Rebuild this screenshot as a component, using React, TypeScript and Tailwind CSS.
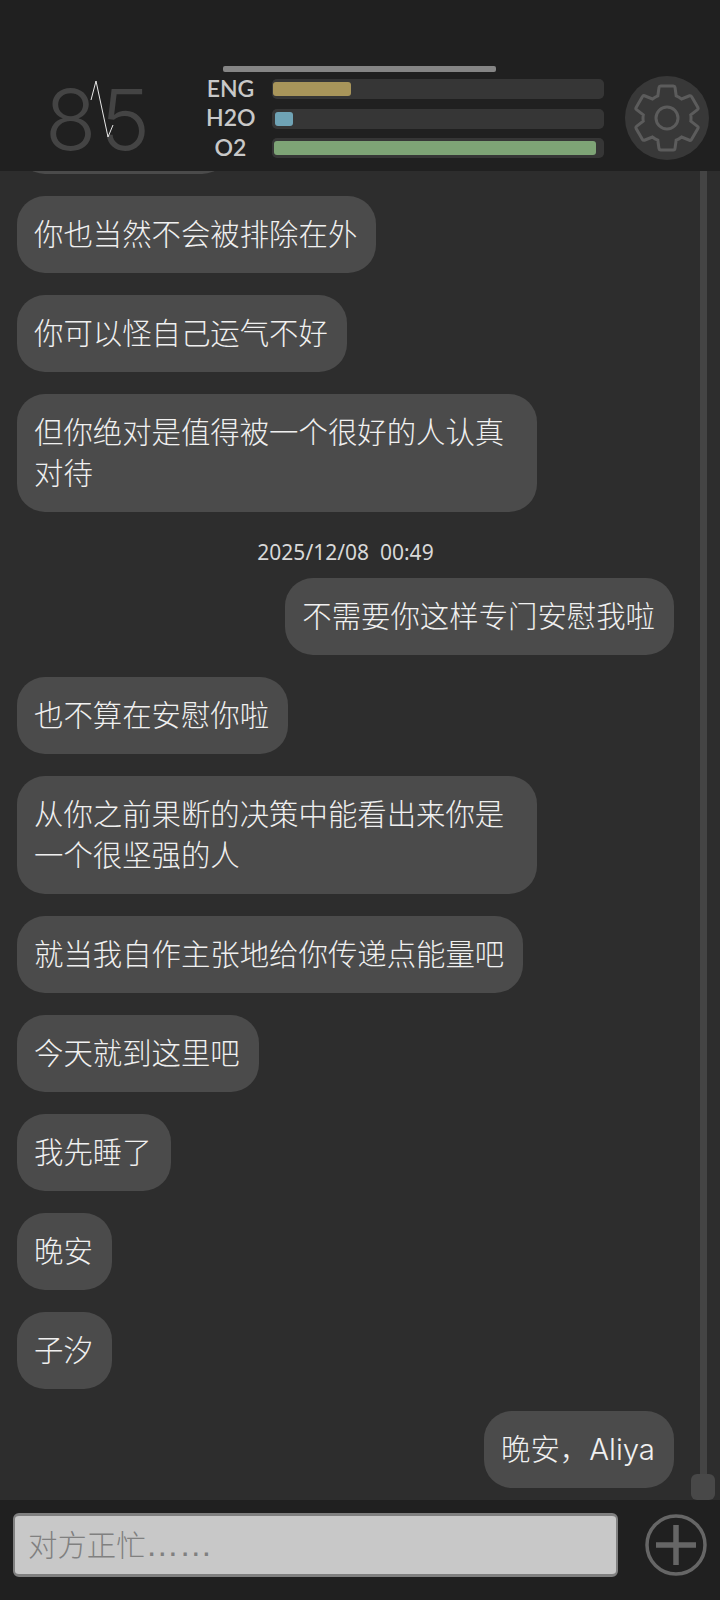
import { Fragment } from "react"

type Message = { id: number; text?: string; mine?: boolean; time?: string }

const messages: Message[] = [
  { id: 1, text: "你也当然不会被排除在外" },
  { id: 2, text: "你可以怪自己运气不好" },
  { id: 3, text: "但你绝对是值得被一个很好的人认真对待" },
  { id: 4, time: "2025/12/08  00:49" },
  { id: 5, text: "不需要你这样专门安慰我啦", mine: true },
  { id: 6, text: "也不算在安慰你啦" },
  { id: 7, text: "从你之前果断的决策中能看出来你是一个很坚强的人" },
  { id: 8, text: "就当我自作主张地给你传递点能量吧" },
  { id: 9, text: "今天就到这里吧" },
  { id: 10, text: "我先睡了" },
  { id: 11, text: "晚安" },
  { id: 12, text: "子汐" },
  { id: 13, text: "晚安，Aliya", mine: true },
]

const stats = [
  { label: "ENG", fill: "w-[78px]", color: "bg-[#a8955a]", inset: "pl-[1px]" },
  { label: "H2O", fill: "w-[18px]", color: "bg-[#6fa3b5]", inset: "pl-[3px]" },
  { label: "O2", fill: "w-[322px]", color: "bg-[#7ea476]", inset: "pl-[2px]" },
]

function StatusBar() {
  return (
    <header className="flex h-[171px] shrink-0 bg-[#202020]">
      <div className="relative mt-[62px] h-[100px] w-[206px] shrink-0">
        <div className="pt-[8px] pl-[45px] font-['Inter'] text-[84px] leading-[100px] font-light tracking-[4px] text-[#444444]">
          85
        </div>
        <svg className="absolute top-0 left-0" width="206" height="100" viewBox="0 0 206 100" fill="none">
          <path d="M91 38 L96 19 L108 75 L113 63" stroke="#e8e8e8" strokeWidth="1" />
        </svg>
      </div>
      <div className="flex w-[398px] shrink-0 flex-col pt-[66px]">
        <div className="ml-[17px] h-[6px] w-[273px] rounded-[2px] bg-[#858585]" />
        <div className="mt-[7px] flex flex-col gap-[9.5px]">
          {stats.map((s) => (
            <div key={s.label} className="flex h-[20px] items-center">
              <div className="-mt-[3px] w-[49px] text-center font-['Lato'] text-[23px] leading-[20px] font-semibold text-[#c8c8c8]">
                {s.label}
              </div>
              <div
                className={`ml-[17px] flex h-[20px] w-[332px] items-center rounded-[5px] bg-[#363636] ${s.inset}`}
              >
                <div className={`h-[14px] rounded-[3px] ${s.fill} ${s.color}`} />
              </div>
            </div>
          ))}
        </div>
      </div>
      <div className="mt-[76px] ml-[21px] flex h-[84px] w-[84px] items-center justify-center rounded-full bg-[#383838]">
        <svg width="80" height="80" viewBox="0 0 24 24" fill="none" stroke="#5c5c5c" strokeWidth="0.9">
          <path d="M19.14 12.94c.04-.3.06-.61.06-.94 0-.32-.02-.64-.07-.94l2.03-1.58c.18-.14.23-.41.12-.61l-1.92-3.32c-.12-.22-.37-.29-.59-.22l-2.39.96c-.5-.38-1.03-.7-1.62-.94l-.36-2.54c-.04-.24-.24-.41-.48-.41h-3.84c-.24 0-.43.17-.47.41l-.36 2.54c-.59.24-1.13.57-1.62.94l-2.39-.96c-.22-.08-.47 0-.59.22L2.74 8.87c-.12.21-.08.47.12.61l2.03 1.58c-.05.3-.09.63-.09.94s.02.64.07.94l-2.03 1.58c-.18.14-.23.41-.12.61l1.92 3.32c.12.22.37.29.59.22l2.39-.96c.5.38 1.03.7 1.62.94l.36 2.54c.05.24.24.41.48.41h3.84c.24 0 .44-.17.47-.41l.36-2.54c.59-.24 1.13-.56 1.62-.94l2.39.96c.22.08.47 0 .59-.22l1.92-3.32c.12-.22.07-.47-.12-.61l-2.01-1.58z" />
          <circle cx="12" cy="12" r="3.3" />
        </svg>
      </div>
    </header>
  )
}

function Bubble({ text, mine }: { text: string; mine?: boolean }) {
  return (
    <div
      className={`max-w-[520px] shrink-0 rounded-[28px] bg-[#4b4b4b] py-[18px] pr-[19px] pl-[17px] font-['Inter','Noto_Sans_CJK_SC',sans-serif] text-[29.4px] leading-[41px] font-light text-[#f0f0f0] [text-spacing-trim:space-all] ${
        mine ? "self-end" : "self-start"
      }`}
    >
      {text}
    </div>
  )
}

export default function App() {
  return (
    <div className="flex h-[1600px] w-[720px] flex-col overflow-hidden bg-[#2d2d2d] font-['Noto_Sans','Noto_Sans_CJK_SC',sans-serif]">
      <StatusBar />
      <div className="flex min-h-0 flex-1">
        <main className="flex w-[691px] shrink-0 flex-col justify-end gap-[22px] overflow-hidden pr-[17px] pb-[12px] pl-[17px]">
          <div className="h-[77px] w-[213px] shrink-0 rounded-[28px] bg-[#4b4b4b]" />
          {messages.map((m) => (
            <Fragment key={m.id}>
              {m.time ? (
                <div className="h-[22px] shrink-0 text-center text-[21px] leading-[36px] whitespace-pre text-[#d8d8d8]">
                  {m.time}
                </div>
              ) : (
                <Bubble text={m.text ?? ""} mine={m.mine} />
              )}
            </Fragment>
          ))}
        </main>
        <div className="flex w-[24px] shrink-0 flex-col items-center">
          <div className="w-[7px] flex-1 bg-[#444444]" />
          <div className="h-[26px] w-[24px] rounded-[6px] bg-[#484848]" />
        </div>
      </div>
      <footer className="flex h-[100px] shrink-0 items-center bg-[#202020] pb-[10px] pl-[13px]">
        <div className="flex h-[64px] w-[605px] items-center rounded-[6px] border-x-[2px] border-y-[3px] border-[#808080] bg-[#c8c8c8] pl-[13px] text-[29.4px] font-light text-[#808080]">
          对方正忙<span className="font-['Liberation_Sans'] text-[33.5px]">……</span>
        </div>
        <svg className="ml-[26px]" width="64" height="64" viewBox="0 0 64 64" fill="none" stroke="#666666" strokeWidth="3.5">
          <circle cx="32" cy="32" r="29" />
          <path d="M32 12V52M12 32H52" strokeWidth="5.5" />
        </svg>
      </footer>
    </div>
  )
}
